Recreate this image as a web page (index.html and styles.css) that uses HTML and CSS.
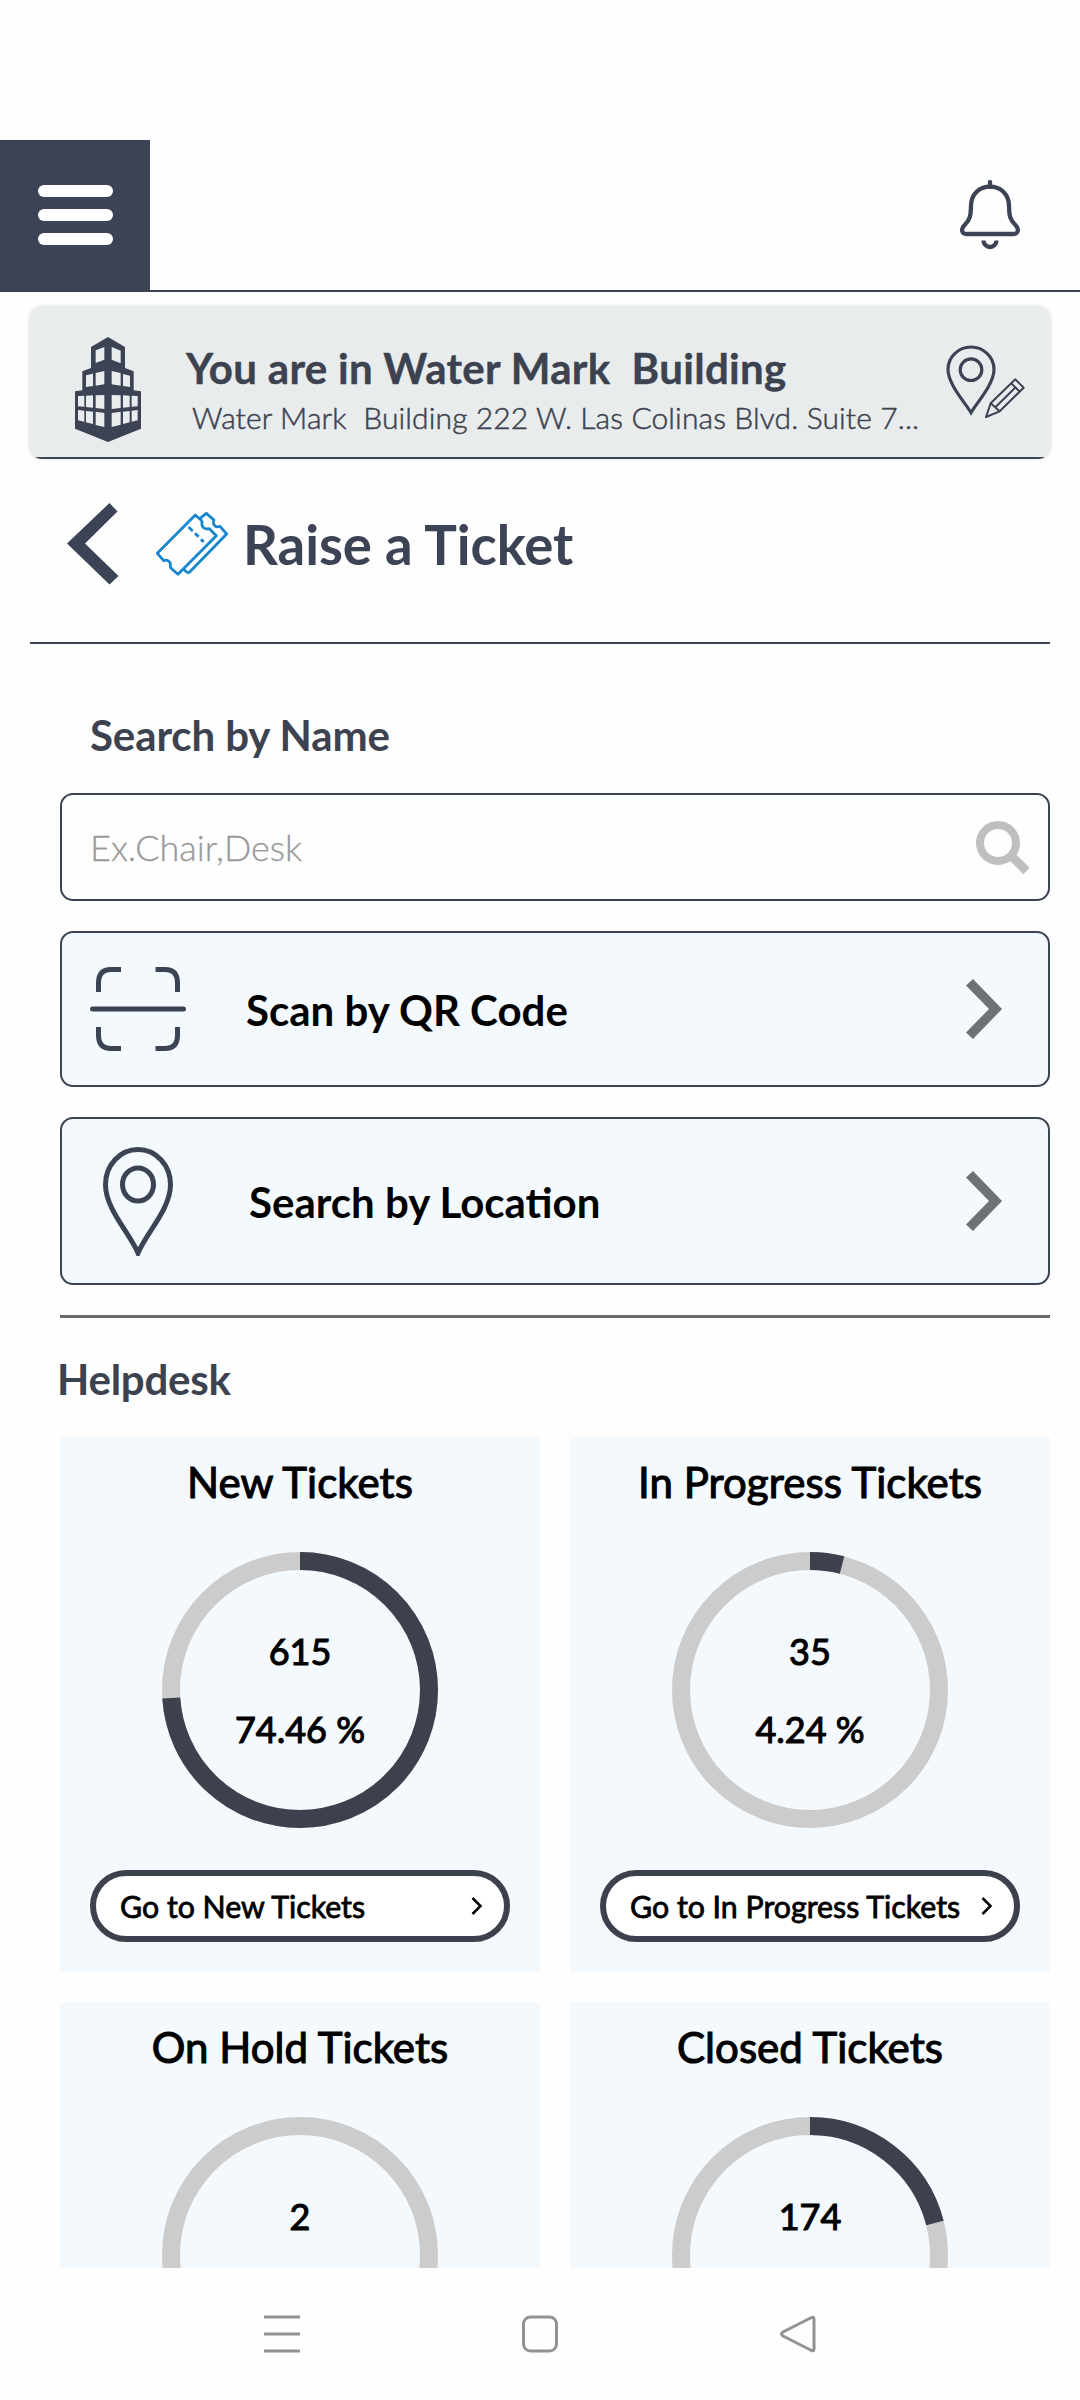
FILE: index.html
```
<!DOCTYPE html>
<html lang="en">
<head>
<meta charset="utf-8">
<title>Raise a Ticket</title>
<link rel="stylesheet" href="styles.css">
</head>
<body>
<div class="screen">
  <header class="topbar">
    <button class="menu" aria-label="Menu"><span></span><span></span><span></span></button>
    <svg class="bell" width="60" height="70" viewBox="0 0 60 70" fill="none" stroke="#3b4354" stroke-width="4.300">
      <path d="M30 2v5" stroke-linecap="round"/>
      <path d="M30 6.700C19 6.700 11.200 14.500 11 25.500C10.800 35 10.500 39.500 4.200 45.500C0.500 49.500 2 54 6.500 54H53.500C58 54 59.500 49.500 55.800 45.500C49.500 39.500 49.200 35 49 25.500C48.800 14.500 41 6.700 30 6.700Z"/>
      <path d="M23.500 60.500a6.500 6.500 0 0 0 13 0"/>
    </svg>
  </header>

  <section class="place">
    <svg class="building" width="66" height="105" viewBox="45 36 198 315">
      <path fill="#3b4354" d="M144 36L195 66V129L221 139V196L243 199V311L144 351L45 311V199L67 196V139L93 129V66Z"/>
      <path fill="#e8ecec" d="M107 76L133 66V104L107 114ZM155 66L182 77V115L155 104ZM78 151L99 146V183L78 186ZM107 144L133 138V178L107 182ZM155 138L182 144V182L155 178ZM189 147L210 152V186L189 183ZM54 213L73 212V245L54 244ZM78 212L99 211V248L78 246ZM107 211L133 210V252L107 249ZM155 210L182 211V249L155 252ZM189 211L209 212V246L189 248ZM215 212L233 213V244L215 245ZM54 255L73 257V290L54 286ZM78 258L99 260V297L78 292ZM107 260L133 264V306L107 300ZM155 264L182 260V299L155 306ZM189 260L209 258V292L189 297ZM215 257L233 255V286L215 290Z"/>
    </svg>
    <div class="place-text">
      <h2>You are in Water Mark&nbsp; Building</h2>
      <p>Water Mark&nbsp; Building 222 W. Las Colinas Blvd. Suite 7...</p>
    </div>
    <svg class="edit-pin" width="79" height="73" viewBox="47 46 237 219" fill="none" stroke="#3b4354" stroke-width="9.500">
      <path d="M122 249C104 218 53 164 53 119a69 67 0 0 1 138 0C191 164 140 218 122 249Z"/>
      <circle cx="122" cy="120" r="32.500"/>
      <g stroke-width="6" stroke-linejoin="round">
        <path d="M167 262L181 221L255 149L280 174L208 245Z"/>
        <path d="M181 221L208 245M243 161L268 186M195 233L256 173"/>
      </g>
    </svg>
  </section>

  <div class="heading">
    <svg class="back" width="52" height="82" viewBox="0 0 52 82"><path fill="#3b4354" d="M42.500 0L50.500 8.500L18 40.500L51.500 73L42.500 81.500L0 40.500Z"/></svg>
    <svg class="ticket" width="72" height="64" viewBox="33 33 216 192" fill="none" stroke="#1987cf" stroke-width="8.500" stroke-linejoin="round" stroke-linecap="round">
      <path d="M151 42L37 157L56 179C66 174 79 182 76 194C74 200 82 204 99 220L214 104L193 83C181 87 168 78 171 66C174 58 163 54 151 42Z"/>
      <path d="M168 50L184 37L207 57C201 70 212 82 225 76L245 99L134 213C130 217 122 213 118 206"/>
      <path d="M131 78L143 90M150 97L161 107M168 115L176 123" stroke-linecap="butt"/>
    </svg>
    <h1>Raise a Ticket</h1>
  </div>

  <main class="content">
    <label class="field-label">Search by Name</label>
    <div class="search">
      <span>Ex.Chair,Desk</span>
      <svg width="54" height="54" viewBox="0 0 54 54" fill="none" stroke="#c0bfc0"><circle cx="22" cy="22" r="18" stroke-width="8"/><path d="M35.500 35L50.500 50" stroke-width="9"/></svg>
    </div>

    <div class="option scan">
      <svg class="scan-icon" width="96" height="86" viewBox="0 0 96 86" fill="none" stroke="#3b4354" stroke-width="5">
        <path d="M8.500 26V17Q8.500 3.500 21 3.500H31M65.500 3.500H75Q87.500 3.500 87.500 17V26M8.500 61V69Q8.500 82.500 21 82.500H31M65.500 82.500H75Q87.500 82.500 87.500 69V61"/>
        <path d="M2.500 43H93.500" stroke-linecap="round"/>
      </svg>
      <span>Scan by QR Code</span>
      <svg class="chev" width="36" height="60" viewBox="0 0 36 60"><path fill="#707173" d="M7 0L36 30L7 60L0 53.500L23 30L0 6.500Z"/></svg>
    </div>

    <div class="option location">
      <svg class="loc-icon" width="70" height="109" viewBox="0 0 70 109" fill="none" stroke="#3b4354" stroke-width="5">
        <path d="M35 106C26 85 2.500 62 2.500 37.500a32.500 35 0 0 1 65 0C67.500 62 44 85 35 106Z"/>
        <ellipse cx="35" cy="37.500" rx="15.500" ry="16.500"/>
      </svg>
      <span>Search by Location</span>
      <svg class="chev" width="36" height="60" viewBox="0 0 36 60"><path fill="#707173" d="M7 0L36 30L7 60L0 53.500L23 30L0 6.500Z"/></svg>
    </div>

    <h3 class="section-title">Helpdesk</h3>

    <div class="cards">
      <article class="card">
        <h4>New Tickets</h4>
        <div class="ring">
          <svg width="276" height="276" viewBox="0 0 276 276"><circle class="track" cx="138" cy="138" r="129"/><circle class="value" cx="138" cy="138" r="129" pathLength="100" stroke-dasharray="74 100"/></svg>
          <div class="figures"><span>615</span><span>74.46 %</span></div>
        </div>
        <button class="go">Go to New Tickets<svg width="12" height="20" viewBox="0 0 12 20"><path d="M1.500 2L9.500 10L1.500 18"/></svg></button>
      </article>
      <article class="card">
        <h4>In Progress Tickets</h4>
        <div class="ring">
          <svg width="276" height="276" viewBox="0 0 276 276"><circle class="track" cx="138" cy="138" r="129"/><circle class="value" cx="138" cy="138" r="129" pathLength="100" stroke-dasharray="4 100"/></svg>
          <div class="figures"><span>35</span><span>4.24 %</span></div>
        </div>
        <button class="go">Go to In Progress Tickets<svg width="12" height="20" viewBox="0 0 12 20"><path d="M1.500 2L9.500 10L1.500 18"/></svg></button>
      </article>
      <article class="card">
        <h4>On Hold Tickets</h4>
        <div class="ring">
          <svg width="276" height="276" viewBox="0 0 276 276"><circle class="track" cx="138" cy="138" r="129"/></svg>
          <div class="figures"><span>2</span></div>
        </div>
      </article>
      <article class="card">
        <h4>Closed Tickets</h4>
        <div class="ring">
          <svg width="276" height="276" viewBox="0 0 276 276"><circle class="track" cx="138" cy="138" r="129"/><circle class="value" cx="138" cy="138" r="129" pathLength="100" stroke-dasharray="21 100"/></svg>
          <div class="figures"><span>174</span></div>
        </div>
      </article>
    </div>
  </main>

  <nav class="sysnav">
    <svg width="36" height="38" viewBox="0 0 36 38"><path d="M0 2H36M0 19H36M0 36H36"/></svg>
    <svg width="36" height="38" viewBox="0 0 36 38"><rect x="1.500" y="2" width="33" height="34" rx="7"/></svg>
    <svg width="36" height="38" viewBox="0 0 36 38"><path d="M31.500 2.500Q34 1.500 34 4V34Q34 36.500 31.500 35.500L3 21Q0 19 3 17Z"/></svg>
  </nav>
</div>
</body>
</html>
```
FILE: styles.css
```
* { box-sizing: border-box; }
body { margin: 0; background: #fefefe; font-family: Lato, sans-serif; color: #000; }
h1, h2, h3, h4, p { margin: 0; }
button { font: inherit; color: inherit; margin: 0; border: 0; }
svg { display: block; flex: none; }

.screen { width: 1080px; height: 2400px; padding-top: 140px; display: flex; flex-direction: column; overflow: hidden; }

.topbar { height: 152px; flex: none; border-bottom: 2px solid #3b4354; display: flex; justify-content: space-between; align-items: flex-start; padding-right: 60px; }
.menu { width: 150px; height: 150px; padding: 0; background: #3b4354; display: flex; flex-direction: column; align-items: center; justify-content: center; gap: 12px; }
.menu span { width: 75px; height: 12px; border-radius: 6px; background: #fff; }
.bell { margin-top: 40px; }

.place { flex: none; height: 153px; margin: 14px 29px 0; padding: 0 26px 0 46px; background: linear-gradient(#e8ecec 151px, #3b4450 151px); border-radius: 13px; box-shadow: 0 0 3px rgba(0, 0, 0, .14); display: flex; align-items: flex-start; color: #3c424f; white-space: nowrap; }
.building { margin-top: 31px; }
.place-text { flex: 1; margin: 37px 0 0 45px; }
.place-text h2 { font-size: 42px; line-height: 50px; font-weight: 700; letter-spacing: .32px; -webkit-text-stroke: .4px #3c424f; }
.place-text p { margin: 6px 0 0 6px; font-size: 30px; line-height: 36px; font-weight: 300; letter-spacing: .12px; -webkit-text-stroke: .5px #3c424f; }
.edit-pin { margin-top: 39px; }

.heading { flex: none; height: 185px; margin: 0 30px; padding: 43px 0 56px 37px; border-bottom: 2px solid #3b4354; display: flex; align-items: center; color: #3b4354; }
.ticket { margin-left: 37px; }
.heading h1 { margin-left: 15px; font-size: 54.500px; line-height: 66px; font-weight: 700; letter-spacing: -.05px; }

.content { height: 1624px; flex: none; overflow: hidden; padding: 66px 30px 0 60px; display: flex; flex-direction: column; }
.field-label, .section-title { font-size: 42px; line-height: 50px; font-weight: 700; letter-spacing: -.1px; color: #3c424f; }
.field-label { margin-left: 30px; }
.search, .option { flex: none; border: 2px solid #3b4354; border-radius: 13px; display: flex; align-items: center; justify-content: space-between; }
.search { height: 108px; margin-top: 33px; padding: 0 18px 0 28px; font-size: 36px; line-height: 44px; font-weight: 300; color: #999; -webkit-text-stroke: .3px #999; }
.search svg { margin-top: 2px; }
.option { margin-top: 30px; background: #f3f9fd; padding-right: 46px; font-size: 42px; line-height: 50px; font-weight: 700; }
.option span { flex: 1; padding-top: 2px; }
.scan { height: 156px; padding-left: 28px; }
.scan span { margin-left: 60px; }
.location { height: 168px; padding-left: 41px; }
.location span { margin-left: 76px; }
.section-title { margin-top: 30px; padding-top: 36px; border-top: 3px solid #6a6a6b; text-indent: -3px; letter-spacing: -.25px; }

.cards { margin-top: 33px; display: grid; grid-template-columns: 480px 480px; grid-auto-rows: 535px; gap: 30px; }
.card { background: #f3f9fd; padding: 20px 30px 0; display: flex; flex-direction: column; align-items: center; -webkit-text-stroke: 1.1px #000; }
.card h4 { font-size: 42px; line-height: 50px; font-weight: 400; letter-spacing: .05px; }
.ring { margin-top: 45px; display: grid; height: 276px; }
.ring > * { grid-area: 1 / 1; }
.ring svg { transform: rotate(-90deg); }
.ring circle { fill: none; stroke-width: 18px; }
.track { stroke: #ccc; }
.value { stroke: #3c414d; }
.figures { position: relative; padding-top: 77px; display: flex; flex-direction: column; align-items: center; gap: 34px; font-size: 36px; line-height: 44px; }
.go { margin-top: 42px; width: 420px; height: 72px; border: 6px solid #3c414d; border-radius: 36px; background: #fff; padding: 0 21px 0 24px; display: flex; align-items: center; justify-content: space-between; font-size: 30.300px; line-height: 36px; white-space: nowrap; -webkit-text-stroke: .8px #000; }
.go path { fill: none; stroke: #000; stroke-width: 2.500px; }

.sysnav { flex: 1; padding: 47px 264px 0; display: flex; justify-content: space-between; }
.sysnav svg { fill: none; stroke: #929292; stroke-width: 3px; }
```
